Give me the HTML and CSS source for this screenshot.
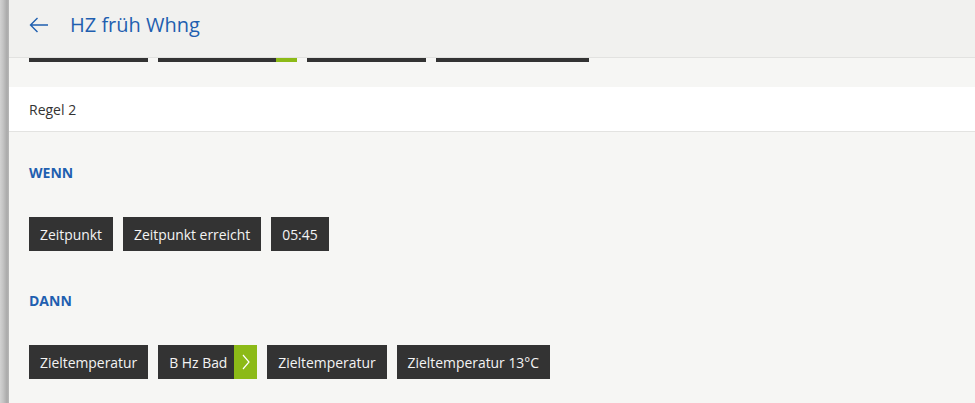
FILE: index.html
```html
<!DOCTYPE html>
<html lang="de">
<head>
<meta charset="utf-8">
<title>HZ früh Whng</title>
<link rel="stylesheet" href="styles.css">
</head>
<body>
<div class="shadow"></div>
<div class="panel">
  <header class="header">
    <svg class="back" width="20" height="16" viewBox="0 0 20 16" aria-hidden="true">
      <path d="M19 8H1.5M8.5 1L1.5 8l7 7" fill="none" stroke="#1f5fb0" stroke-width="1.4"/>
    </svg>
    <h1 class="title">HZ früh Whng</h1>
  </header>
  <div class="strip">
    <span class="bar w119"></span>
    <span class="bar w118 tail"></span>
    <span class="bar w119"></span>
    <span class="bar w153"></span>
  </div>
  <div class="rule-row">Regel 2</div>
  <section class="section first">
    <h2 class="label">WENN</h2>
    <div class="chips">
      <span class="chip">Zeitpunkt</span>
      <span class="chip">Zeitpunkt erreicht</span>
      <span class="chip">05:45</span>
    </div>
  </section>
  <section class="section">
    <h2 class="label">DANN</h2>
    <div class="chips">
      <span class="chip">Zieltemperatur</span>
      <span class="chip split">B Hz Bad<span class="go"><svg width="8" height="16" viewBox="0 0 8 16" aria-hidden="true"><path d="M1 1l6 7-6 7" fill="none" stroke="#ffffff" stroke-width="1.2"/></svg></span></span>
      <span class="chip">Zieltemperatur</span>
      <span class="chip">Zieltemperatur 13°C</span>
    </div>
  </section>
</div>
</body>
</html>
```

FILE: styles.css
```css
* { box-sizing: border-box; }
html, body { height: 100%; }
body {
  margin: 0;
  display: flex;
  font-family: "Open Sans", "Liberation Sans", sans-serif;
  background: #f6f6f4;
  overflow: hidden;
}
.shadow {
  width: 9px;
  flex: none;
  background: linear-gradient(to right, #d2d2d2 0px, #c4c4c4 3px, #aaaaaa 7px, #b8b8b8 9px);
}
.panel {
  flex: 1;
  background: #f6f6f4;
  min-height: 100%;
}
.header {
  height: 58px;
  background: #f1f1ef;
  border-bottom: 1px solid #e2e2e0;
  display: flex;
  align-items: center;
  padding: 0 0 0 20px;
  gap: 21px;
}
.back { flex: none; margin-top: -8px; }
.title {
  margin: 0;
  font-size: 20px;
  font-weight: 400;
  color: #1f5fb0;
  margin-top: -8px;
}
.strip {
  display: flex;
  gap: 10px;
  padding-left: 20px;
  height: 29px;
}
.bar {
  height: 4px;
  background: #333333;
  display: block;
}
.w119 { width: 119px; }
.w118 { width: 139px; }
.w153 { width: 153px; }
.tail { background: linear-gradient(to right, #333333 118px, #8cba17 118px); }
.rule-row {
  height: 45px;
  background: #ffffff;
  border-bottom: 1px solid #e3e3e1;
  display: flex;
  align-items: center;
  padding-left: 20px;
  font-size: 14px;
  color: #333333;
}
.section { padding-left: 20px; }
.section.first { padding-top: 31px; }
.label {
  margin: 0;
  font-size: 14px;
  line-height: 19px;
  font-weight: 700;
  color: #1f5fb0;
}
.chips {
  display: flex;
  gap: 10px;
  margin-top: 35px;
  margin-bottom: 40px;
}
.chip {
  height: 34px;
  display: inline-flex;
  align-items: center;
  padding: 0 11px;
  background: #333333;
  color: #f4f4f4;
  font-size: 13.9px;
  white-space: nowrap;
}
.chip.split { padding-right: 0; }
.go {
  margin-left: 7px;
  width: 23px;
  height: 34px;
  background: #8cba17;
  display: flex;
  align-items: center;
  justify-content: center;
}
```
